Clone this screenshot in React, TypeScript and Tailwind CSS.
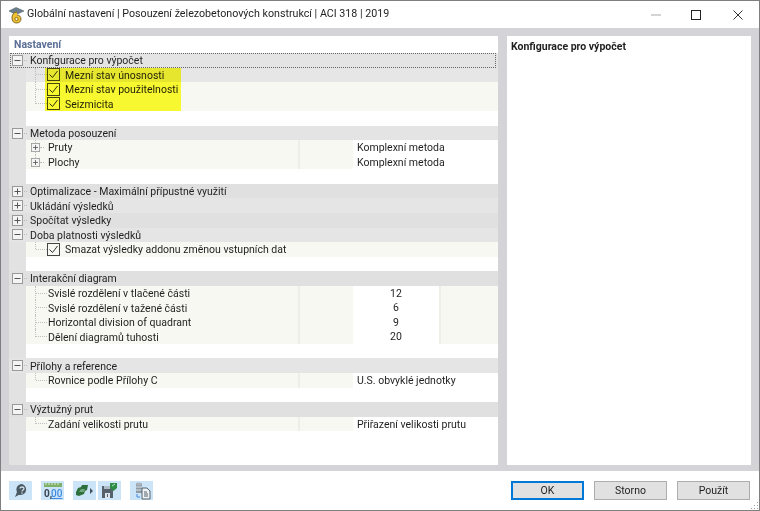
import React from "react";

type Row = {
  kind: "group" | "child" | "blank";
  label?: string;
  bg?: string;
  open?: boolean;
  check?: boolean;
  plus?: boolean;
  value?: string;
  center?: boolean;
  last?: boolean;
  focus?: boolean;
};

const rows: Row[] = [
  { kind: "group", label: "Konfigurace pro výpočet", open: true, focus: true, bg: "bg-[#e4e4e4]" },
  { kind: "child", label: "Mezní stav únosnosti", check: true, bg: "bg-[#e6e6e6]" },
  { kind: "child", label: "Mezní stav použitelnosti", check: true },
  { kind: "child", label: "Seizmicita", check: true, last: true },
  { kind: "blank" },
  { kind: "group", label: "Metoda posouzení", open: true, bg: "bg-[#e4e4e4]" },
  { kind: "child", label: "Pruty", plus: true, value: "Komplexní metoda" },
  { kind: "child", label: "Plochy", plus: true, value: "Komplexní metoda", last: true },
  { kind: "blank" },
  { kind: "group", label: "Optimalizace - Maximální přípustné využití", bg: "bg-[#e0e0e0]" },
  { kind: "group", label: "Ukládání výsledků", bg: "bg-[#e5e5e5]" },
  { kind: "group", label: "Spočítat výsledky", bg: "bg-[#e0e0e0]" },
  { kind: "group", label: "Doba platnosti výsledků", open: true, bg: "bg-[#e5e5e5]" },
  { kind: "child", label: "Smazat výsledky addonu změnou vstupních dat", check: true, last: true },
  { kind: "blank" },
  { kind: "group", label: "Interakční diagram", open: true, bg: "bg-[#e0e0e0]" },
  { kind: "child", label: "Svislé rozdělení v tlačené části", value: "12", center: true },
  { kind: "child", label: "Svislé rozdělení v tažené části", value: "6", center: true },
  { kind: "child", label: "Horizontal division of quadrant", value: "9", center: true },
  { kind: "child", label: "Dělení diagramů tuhosti", value: "20", center: true, last: true },
  { kind: "blank" },
  { kind: "group", label: "Přílohy a reference", open: true, bg: "bg-[#e5e5e5]" },
  { kind: "child", label: "Rovnice podle Přílohy C", value: "U.S. obvyklé jednotky", last: true },
  { kind: "blank" },
  { kind: "group", label: "Výztužný prut", open: true, bg: "bg-[#e0e0e0]" },
  { kind: "child", label: "Zadání velikosti prutu", value: "Přiřazení velikosti prutu", last: true },
];

const Expander = ({ open, small }: { open?: boolean; small?: boolean }) => (
  <svg width={small ? 9 : 11} height={small ? 9 : 11} viewBox="0 0 11 11" className="shrink-0">
    <rect x="0.5" y="0.5" width="10" height="10" fill="#f4f4f4" stroke="#9a9a9a" />
    <path d={open ? "M2.5 5.5h6" : "M2.5 5.5h6M5.5 2.5v6"} stroke="#555" fill="none" />
  </svg>
);

const Check = () => (
  <span className="w-[13px] h-[13px] shrink-0 border border-[#444] flex items-center justify-center">
    <svg width="11" height="11" viewBox="0 0 11 11">
      <path d="M1.5 5.500l3 3 5-6.500" stroke="#333" strokeWidth="1" fill="none" />
    </svg>
  </span>
);

const TreeRow = ({ row }: { row: Row }) => {
  if (row.kind === "blank") {
    return (
      <div className="h-[14.56px] flex bg-white">
        <div className="w-[17px] bg-[#e2e2e2]" />
      </div>
    );
  }
  if (row.kind === "group") {
    return (
      <div className={`h-[14.56px] flex items-center relative ${row.bg}`}>
        <div className="w-[3px]" />
        <Expander open={row.open} />
        <div className="w-[3px] ml-[1px] border-t border-dotted border-[#bbb]" />
        <span className="ml-[3px] text-[#1f1f1f] relative top-[0.8px]">{row.label}</span>
        {row.focus && (
          <div className="absolute left-[1px] right-[2px] top-0 bottom-0 border border-dotted border-[#666]" />
        )}
      </div>
    );
  }
  return (
    <div className="h-[14.56px] flex">
      <div className="w-[17px] bg-[#e2e2e2]" />
      <div className={`flex-1 flex items-stretch min-w-0 ${row.bg ?? "bg-[#f8f8f2]"}`}>
        <div className="w-[272px] flex items-center relative">
          <div
            className={`absolute left-[9px] top-0 border-l border-dotted border-[#c0c0c0] ${
              row.last ? "h-1/2" : "h-full"
            }`}
          />
          {row.plus ? (
            <span className="ml-[5px] flex items-center relative">
              <Expander small />
              <span className="w-[4px] mr-[4px] border-t border-dotted border-[#bbb]" />
            </span>
          ) : (
            <span
              className={`ml-[10px] border-t border-dotted border-[#c0c0c0] ${
                row.check ? "w-[11px]" : "w-[11px] mr-[1px]"
              }`}
            />
          )}
          {row.check ? (
            <span className="flex items-center gap-[5px] relative">
              <Check />
              <span className="text-[#1f1f1f] whitespace-nowrap relative top-[0.8px]">{row.label}</span>
            </span>
          ) : (
            <span className="text-[#1f1f1f] whitespace-nowrap relative top-[0.8px]">{row.label}</span>
          )}
        </div>
        {row.value && (
          <>
            <div className="w-[55px] border-l-2 border-[#eeeee8]" />
            {row.center ? (
              <>
                <div className="w-[86px] bg-white text-center text-[#1f1f1f] leading-[16px]">{row.value}</div>
                <div className="flex-1 border-l-2 border-[#eeeee8]" />
              </>
            ) : (
              <div className="flex-1 bg-white pl-[4px] text-[#1f1f1f] leading-[16px]">{row.value}</div>
            )}
          </>
        )}
      </div>
    </div>
  );
};

const ToolIcon = ({ children, className }: { children: React.ReactNode; className?: string }) => (
  <div className={`w-[23px] h-[19px] bg-[#cce4f7] flex items-center justify-center ${className ?? ""}`}>
    {children}
  </div>
);

const Btn = ({ label, primary }: { label: string; primary?: boolean }) => (
  <button
    className={`w-[73px] h-[19px] bg-[#e1e1e1] flex items-center justify-center text-[#1f1f1f] ${
      primary ? "border-2 border-[#0078d7]" : "border border-[#adadad]"
    }`}
  >
    {label}
  </button>
);

export default function App() {
  return (
    <div
      className="w-[760px] h-[511px] flex flex-col bg-white border border-[#7f7f7f] text-[10.5px] overflow-hidden"
      style={{ fontFamily: 'Roboto, "Noto Sans", sans-serif' }}
    >
      {/* title bar */}
      <div className="h-[27px] shrink-0 flex items-center pl-[7px]">
        <svg width="17" height="18" viewBox="0 0 17 18" className="shrink-0">
          <path d="M1 5l7-3.500L16 5l-8 3.500z" fill="#6d7f8f" stroke="#3f4f5c" strokeWidth="0.5" />
          <path d="M9 6C5.500 6 4 9 4 12s1.500 5 4.500 5 4.500-1.800 4.500-4-1.500-4-4-4" fill="#f0c232" stroke="#6b5210" strokeWidth="0.8" />
          <circle cx="8.500" cy="13" r="1.600" fill="#fff3c0" stroke="#6b5210" strokeWidth="0.7" />
        </svg>
        <span className="ml-[2px] text-[10.7px] text-[#1f1f1f] whitespace-nowrap">
          Globální nastavení | Posouzení železobetonových konstrukcí | ACI 318 | 2019
        </span>
        <div className="ml-auto flex items-center">
          <div className="w-[38px] flex justify-center">
            <span className="w-[10px] border-t-2 border-[#d4d4d4]" />
          </div>
          <div className="w-[42px] flex justify-center">
            <span className="w-[10px] h-[10px] border border-[#222]" />
          </div>
          <div className="w-[42px] flex justify-center">
            <svg width="10" height="10" viewBox="0 0 10 10">
              <path d="M.5.5l9 9M9.500.5l-9 9" stroke="#333" fill="none" />
            </svg>
          </div>
        </div>
      </div>

      {/* panels */}
      <div className="flex-1 min-h-0 bg-[#d4d4d8] pt-[8px] pb-[6px] pl-[8px] pr-[8px] flex gap-[9px]">
        <div className="w-[489px] bg-white flex flex-col relative">
          <div className="h-[17px] shrink-0 flex items-center pl-[5px] font-bold text-[#5b6f96]">Nastavení</div>
          {rows.map((r, i) => (
            <TreeRow key={i} row={r} />
          ))}
          <div className="flex-1 flex">
            <div className="w-[17px] bg-[#e2e2e2]" />
          </div>
          {/* marker highlight over the three limit states */}
          <div className="absolute left-[36px] top-[32px] w-[136px] h-[43px] bg-[#ffff00] mix-blend-multiply opacity-80" />
        </div>
        <div className="flex-1 bg-white pl-[4px] pt-[3px]">
          <span className="font-bold text-[#1f1f1f]">Konfigurace pro výpočet</span>
        </div>
      </div>

      {/* footer */}
      <div className="h-[39px] shrink-0 flex items-center pl-[8px] pr-[9px] relative">
        <ToolIcon>
          <svg width="15" height="15" viewBox="0 0 15 15">
            <path d="M9 1a5.500 5.500 0 0 0-5 8L2 14l4-2.200A5.500 5.500 0 1 0 9 1z" fill="#4a5862" />
            <path d="M7 5.500c0-2 4-2 4 0 0 1.500-2 1.500-2 3M9 9.500v1.200" stroke="#cfe0ee" strokeWidth="1.300" fill="none" />
          </svg>
        </ToolIcon>
        <ToolIcon className="ml-[9px]">
          <svg width="20" height="17" viewBox="0 0 20 17">
            <rect x="1" y="1" width="18" height="4" fill="#7fb069" />
            <path d="M3 1v2M6 1v2M9 1v2M12 1v2M15 1v2" stroke="#d9ecd0" />
            <text x="1" y="15" fontSize="10" fontWeight="700" fill="#3a4650" fontFamily="Roboto">0,</text>
            <text x="8" y="15" fontSize="10" fontWeight="500" fill="#3f8be0" fontFamily="Roboto" textDecoration="underline">00</text>
          </svg>
        </ToolIcon>
        <ToolIcon className="ml-[9px]">
          <svg width="19" height="14" viewBox="0 0 19 14">
            <path d="M1 8l2-4 3-1 1-2 6 0-1 5-2 1-1 3-5 2-3-1z" fill="#2f6f3c" />
            <path d="M4 8l2-3h4l-1 3z" fill="#6fa67a" />
            <path d="M15 4l3 3-3 3z" fill="#44525e" />
          </svg>
        </ToolIcon>
        <ToolIcon className="ml-[2px]">
          <svg width="19" height="17" viewBox="0 0 19 17">
            <path d="M2 4h11v12H2z" fill="#55626c" />
            <path d="M4 4h6v3H4z" fill="#aebcc8" />
            <path d="M5 11h5v5H5z" fill="#dbe6ef" />
            <path d="M7 12h1v3H7z" fill="#55626c" />
            <path d="M10 1h7v5l-3.500 3L10 6z" fill="#2f8c45" />
            <path d="M12 4l3-2" stroke="#bfe2c8" />
          </svg>
        </ToolIcon>
        <ToolIcon className="ml-[9px]">
          <svg width="19" height="18" viewBox="0 0 19 18">
            <path d="M4 1h6v10H4z" fill="#8d99a4" />
            <ellipse cx="7" cy="2" rx="3" ry="1.500" fill="#aab4bd" />
            <path d="M4 5h6M4 8h6" stroke="#d8e3ec" />
            <path d="M5 12v3h3" stroke="#3f8be0" fill="none" />
            <path d="M10 6h5l3 3v8h-8z" fill="#eef2f5" stroke="#55626e" />
            <path d="M12 10h3M12 12h4M12 14h4" stroke="#55626e" />
          </svg>
        </ToolIcon>
        <div className="ml-auto flex gap-[10px]">
          <Btn label="OK" primary />
          <Btn label="Storno" />
          <Btn label="Použít" />
        </div>
        <svg width="8" height="8" viewBox="0 0 8 8" className="absolute right-0 bottom-0">
          <path d="M6 0h1v1H6zM3 3h1v1H3zM6 3h1v1H6zM0 6h1v1H0zM3 6h1v1H3zM6 6h1v1H6z" fill="#a0a0a0" />
        </svg>
      </div>
    </div>
  );
}
